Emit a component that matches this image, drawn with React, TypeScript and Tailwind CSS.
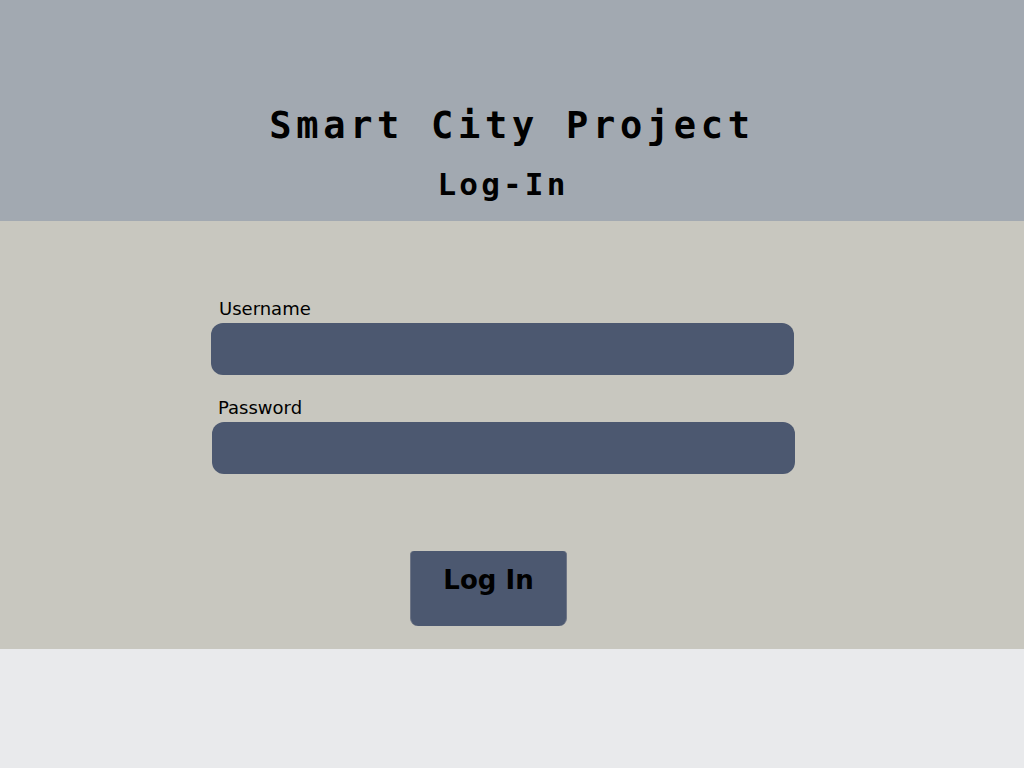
import React, { useState } from 'react';

export default function App() {
  const [username, setUsername] = useState('');
  const [password, setPassword] = useState('');

  return (
    <div className="w-[1024px] h-[768px] bg-[#e9eaec] flex flex-col" style={{ fontFamily: '"DejaVu Sans", sans-serif' }}>
      {/* header */}
      <header className="h-[221px] bg-[#a2a9b1] flex flex-col items-center pt-[104px]">
        <h1
          className="text-[37px] leading-[44px] font-bold tracking-[4.7px] text-black"
          style={{ fontFamily: '"DejaVu Sans Mono", monospace' }}
        >
          Smart City Project
        </h1>
        <h2
          className="text-[31px] leading-[38px] font-bold tracking-[3.2px] text-black mt-[17px] mr-[18px]"
          style={{ fontFamily: '"DejaVu Sans Mono", monospace' }}
        >
          Log-In
        </h2>
      </header>

      {/* form */}
      <form
        className="h-[428px] bg-[#c8c7bf] flex flex-col pt-[77px]"
        onSubmit={e => e.preventDefault()}
      >
        <div className="ml-[211px] w-[583px]">
          <label className="block text-[18px] leading-[22px] text-black ml-[8px] mb-[3px]">Username</label>
          <input
            type="text"
            value={username}
            onChange={e => setUsername(e.target.value)}
            className="w-full h-[52px] rounded-[12px] bg-[#4c5870] outline-none px-3 text-white"
          />
        </div>
        <div className="ml-[212px] w-[583px] mt-[22px]">
          <label className="block text-[18px] leading-[22px] text-black ml-[6px] mb-[3px]">Password</label>
          <input
            type="password"
            value={password}
            onChange={e => setPassword(e.target.value)}
            className="w-full h-[52px] rounded-[12px] bg-[#4c5870] outline-none px-3 text-white"
          />
        </div>
        <button
          type="submit"
          className="ml-[410px] mt-[77px] w-[157px] h-[75px] bg-[#4c5870] border-x border-[#6e7585] rounded-t-[4px] rounded-b-[8px] flex justify-center pt-[14px] text-[26px] leading-[30px] font-bold text-black"
        >
          Log In
        </button>
      </form>
    </div>
  );
}
